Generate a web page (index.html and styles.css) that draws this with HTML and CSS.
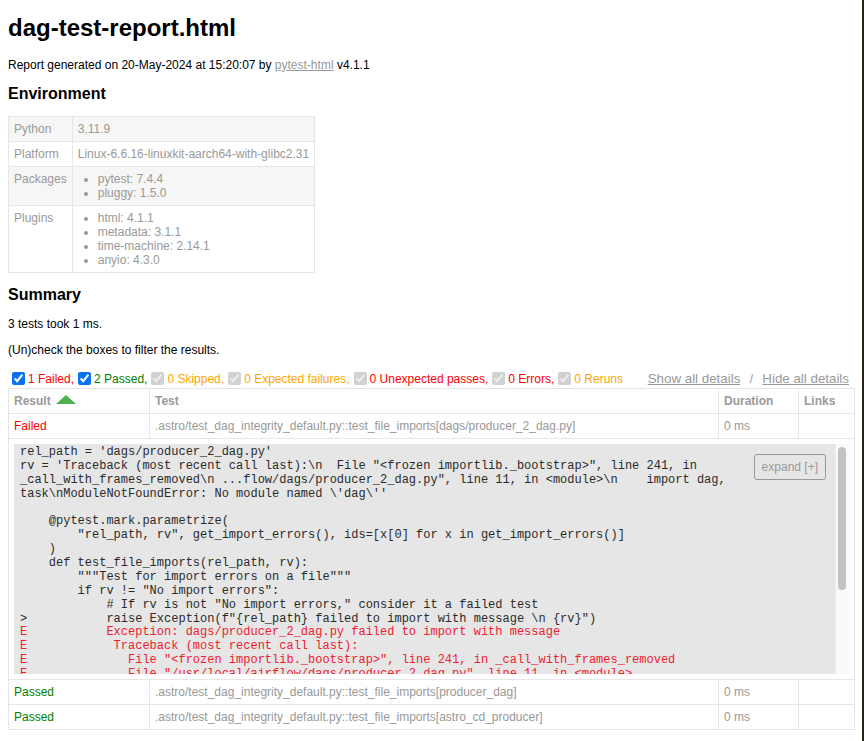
FILE: index.html
```html
<!DOCTYPE html>
<html>
<head>
<meta charset="utf-8">
<title>dag-test-report.html</title>
<link rel="stylesheet" href="styles.css">
</head>
<body>
<h1 class="title">dag-test-report.html</h1>
<p class="generated">Report generated on 20-May-2024 at 15:20:07 by <a href="#">pytest-html</a> v4.1.1</p>
<h2 class="section-title">Environment</h2>
<table class="env">
  <tr><td>Python</td><td>3.11.9</td></tr>
  <tr><td>Platform</td><td>Linux-6.6.16-linuxkit-aarch64-with-glibc2.31</td></tr>
  <tr><td>Packages</td><td><ul><li>pytest: 7.4.4</li><li>pluggy: 1.5.0</li></ul></td></tr>
  <tr><td>Plugins</td><td><ul><li>html: 4.1.1</li><li>metadata: 3.1.1</li><li>time-machine: 2.14.1</li><li>anyio: 4.3.0</li></ul></td></tr>
</table>
<h2 class="section-title">Summary</h2>
<p class="run-count">3 tests took 1 ms.</p>
<p class="filter-hint">(Un)check the boxes to filter the results.</p>
<div class="controls">
  <div class="filters">
    <input type="checkbox" class="filter" checked><span class="failed">1 Failed,</span>
    <input type="checkbox" class="filter" checked><span class="passed">2 Passed,</span>
    <input type="checkbox" class="filter" checked disabled><span class="skipped">0 Skipped,</span>
    <input type="checkbox" class="filter" checked disabled><span class="skipped">0 Expected failures,</span>
    <input type="checkbox" class="filter" checked disabled><span class="failed">0 Unexpected passes,</span>
    <input type="checkbox" class="filter" checked disabled><span class="failed">0 Errors,</span>
    <input type="checkbox" class="filter" checked disabled><span class="skipped">0 Reruns</span>
  </div>
  <div class="collapse"><button class="link-btn">Show all details</button><span class="sep">&nbsp;/&nbsp;</span><button class="link-btn">Hide all details</button></div>
</div>
<table class="results">
  <colgroup><col class="c-result"><col><col class="c-duration"><col class="c-links"></colgroup>
  <thead>
    <tr><th>Result<span class="sort-asc"></span></th><th>Test</th><th>Duration</th><th>Links</th></tr>
  </thead>
  <tbody>
    <tr class="row-failed"><td class="col-result">Failed</td><td>.astro/test_dag_integrity_default.py::test_file_imports[dags/producer_2_dag.py]</td><td>0 ms</td><td></td></tr>
    <tr class="extras">
      <td colspan="4">
        <div class="logwrapper">
          <div class="logview">
<div class="log">rel_path = 'dags/producer_2_dag.py'
rv = 'Traceback (most recent call last):\n  File "&lt;frozen importlib._bootstrap&gt;", line 241, in
_call_with_frames_removed\n ...flow/dags/producer_2_dag.py", line 11, in &lt;module&gt;\n    import dag,
task\nModuleNotFoundError: No module named \'dag\''

    @pytest.mark.parametrize(
        "rel_path, rv", get_import_errors(), ids=[x[0] for x in get_import_errors()]
    )
    def test_file_imports(rel_path, rv):
        """Test for import errors on a file"""
        if rv != "No import errors":
            # If rv is not "No import errors," consider it a failed test
&gt;           raise Exception(f"{rel_path} failed to import with message \n {rv}")
<span class="err">E           Exception: dags/producer_2_dag.py failed to import with message
E            Traceback (most recent call last):
E              File "&lt;frozen importlib._bootstrap&gt;", line 241, in _call_with_frames_removed
E              File "/usr/local/airflow/dags/producer_2_dag.py", line 11, in &lt;module&gt;
E                import dag, task
E            ModuleNotFoundError: No module named 'dag'</span>

.astro/test_dag_integrity_default.py:130: Exception</div>
            <div class="logexpander">expand [+]</div>
          </div>
          <div class="scrolltrack"><div class="scrollthumb"></div></div>
        </div>
      </td>
    </tr>
    <tr class="row-passed"><td class="col-result">Passed</td><td>.astro/test_dag_integrity_default.py::test_file_imports[producer_dag]</td><td>0 ms</td><td></td></tr>
    <tr class="row-passed"><td class="col-result">Passed</td><td>.astro/test_dag_integrity_default.py::test_file_imports[astro_cd_producer]</td><td>0 ms</td><td></td></tr>
  </tbody>
</table>
<div class="window-edge"></div>
</body>
</html>
```

FILE: styles.css
```css
html {
  overflow: hidden;
}

body {
  margin: 0 9px 8px 8px;
  font-family: "Liberation Sans", Arial, Helvetica, sans-serif;
  font-size: 12px;
  color: #999;
  background: #fff;
}

.title {
  font-size: 24px;
  color: #000;
  margin: 14px 0 16px;
}

.section-title {
  font-size: 16px;
  color: #000;
  margin: 13px 0;
}

p {
  color: #000;
  margin: 12px 0;
}

a {
  color: #999;
}

table {
  border-collapse: collapse;
}

/* Environment */
.env td {
  padding: 5px;
  border: 1px solid #e6e6e6;
  vertical-align: top;
}
.env tr:nth-child(odd) {
  background-color: #f6f6f6;
}
.env ul {
  margin: 0;
  padding: 0 20px;
}

/* Result colors */
.failed, .row-failed .col-result { color: red; }
.passed, .row-passed .col-result { color: green; }
.skipped { color: orange; }

/* Controls */
.controls {
  display: flex;
  justify-content: space-between;
  align-items: center;
}
.filters, .collapse {
  display: flex;
  align-items: center;
}
.filter {
  width: 13px;
  height: 13px;
  margin: 3px 3px 3px 4px;
  accent-color: #0a72ef;
}
.link-btn {
  font-family: "Liberation Sans", Arial, sans-serif;
  font-size: 13.333px;
  color: #999;
  border: none;
  background: none;
  padding: 1px 6px;
  text-decoration: underline;
  cursor: pointer;
}
.sep {
  font-size: 12px;
  color: #999;
}

/* Results table */
.results {
  border: 1px solid #e6e6e6;
  color: #999;
  font-size: 12px;
  width: 100%;
  table-layout: fixed;
}
.results th, .results td {
  padding: 5px;
  border: 1px solid #e6e6e6;
  text-align: left;
}
.results th {
  font-weight: bold;
}
.c-result { width: 141px; }
.c-duration { width: 80px; }
.c-links { width: 56px; }

.sort-asc {
  display: inline-block;
  width: 0;
  height: 0;
  margin-left: 5px;
  border-left: 10px solid transparent;
  border-right: 10px solid transparent;
  border-bottom: 9px solid #4caf50;
  vertical-align: 1px;
}

/* Log */
.logwrapper {
  display: flex;
  height: 230px;
  overflow: hidden;
  background-color: #e6e6e6;
}
.logview {
  position: relative;
  flex: 1 1 auto;
  min-width: 0;
  overflow: hidden;
}
.logexpander {
  position: absolute;
  top: 10px;
  right: 9px;
  border: 1px solid #999;
  border-radius: 3px;
  padding: 5px 7px;
  background-color: #e6e6e6;
  color: #999;
  font-size: 12px;
  line-height: 14px;
}
.log {
  border: 1px solid #e6e6e6;
  color: #2a2a2a;
  font-family: "Liberation Mono", "Courier New", monospace;
  font-size: 12px;
  line-height: 13.87px;
  padding: 1px 80px 5px 5px;
  white-space: pre;
}
.err {
  color: #f02030;
}
.scrolltrack {
  flex: 0 0 14px;
  background: #f9f9f9;
  border-left: 1px solid #ececec;
  box-sizing: border-box;
  padding: 3px 3px 0 2px;
}
.scrollthumb {
  height: 143px;
  border-radius: 4px;
  background: #c2c2c2;
}

.window-edge {
  position: fixed;
  top: 0;
  right: 0;
  width: 2px;
  height: 100%;
  background: #2a2419;
}
```
